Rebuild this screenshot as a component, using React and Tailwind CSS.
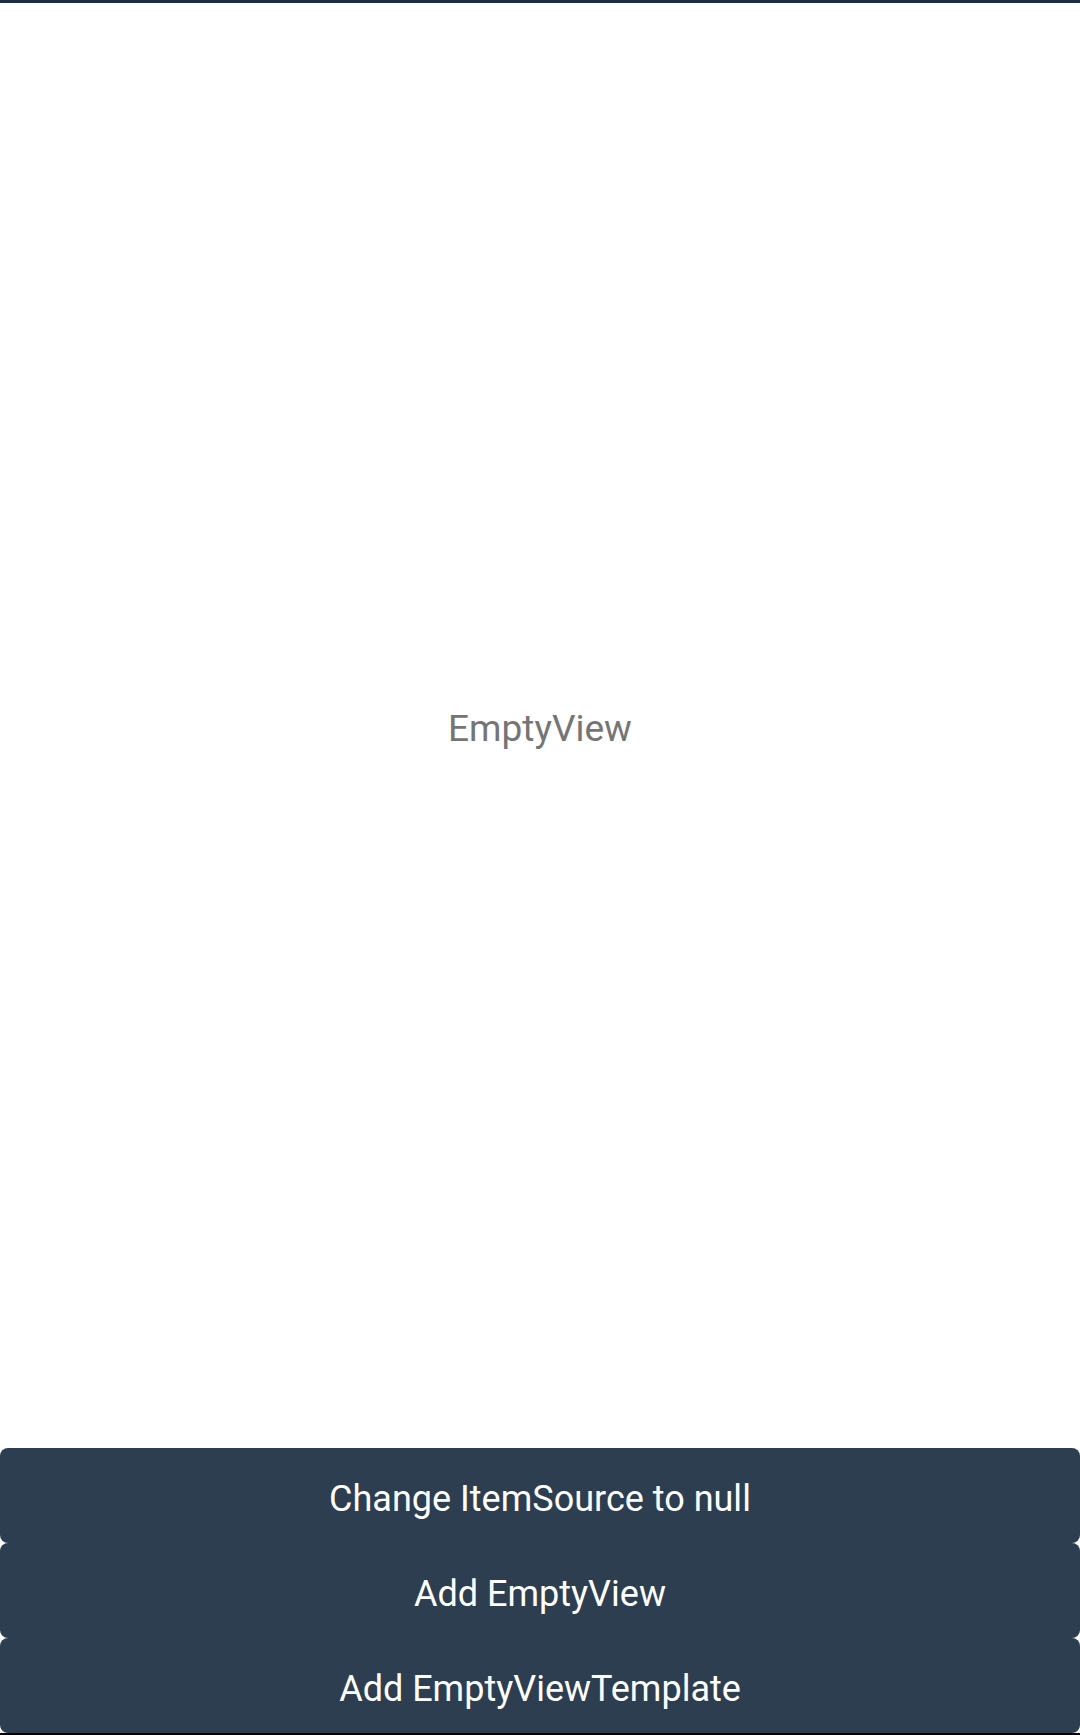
import React from "react";

const buttons = ["Change ItemSource to null", "Add EmptyView", "Add EmptyViewTemplate"];

export default function App() {
  return (
    <div className="flex flex-col w-[1080px] h-[1735px] bg-white" style={{ fontFamily: "Roboto, 'Noto Sans', sans-serif" }}>
      <div className="h-[3px] bg-[#1c2f46]" />
      <div className="flex flex-1 items-center justify-center pt-[6px]">
        <span className="text-[37px] leading-none text-[#757575]">EmptyView</span>
      </div>
      <div className="flex flex-col">
        {buttons.map((b) => (
          <button key={b} className="h-[95px] w-full rounded-lg bg-[#2c3e50] pt-[6px] text-[36px] text-white">
            {b}
          </button>
        ))}
      </div>
      <div className="h-[2px] bg-black" />
    </div>
  );
}
